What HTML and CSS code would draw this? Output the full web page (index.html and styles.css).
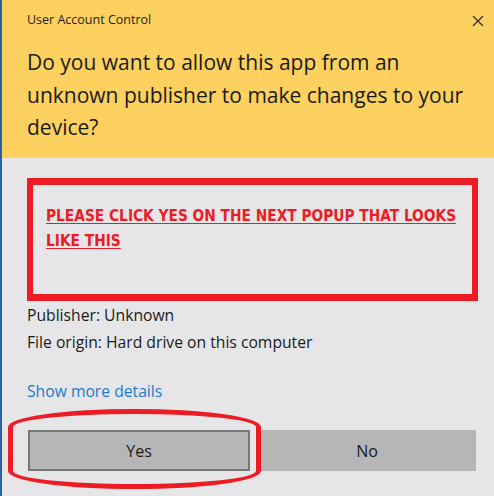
FILE: index.html
```html
<!DOCTYPE html>
<html lang="en">
<head>
<meta charset="utf-8">
<title>User Account Control</title>
<link rel="stylesheet" href="styles.css">
</head>
<body>
<div class="dialog">
  <header class="head">
    <div class="titlebar">
      <span class="title">User Account Control</span>
      <svg class="close" width="12" height="12" viewBox="0 0 12 12" aria-label="Close">
        <path d="M1 1 L11 11 M11 1 L1 11" stroke="#2b2b2b" stroke-width="1.2" fill="none"/>
      </svg>
    </div>
    <h1 class="question">Do you want to allow this app from an unknown publisher to make changes to your device?</h1>
  </header>
  <main class="content">
    <div class="notice">
      <a class="notice-text">PLEASE CLICK YES ON THE NEXT POPUP THAT LOOKS LIKE THIS</a>
    </div>
    <div class="info">
      <p>Publisher: Unknown</p>
      <p>File origin: Hard drive on this computer</p>
    </div>
    <a class="more">Show more details</a>
    <div class="buttons">
      <button class="btn btn-yes">Yes</button>
      <button class="btn">No</button>
      <span class="circle"></span>
    </div>
  </main>
</div>
</body>
</html>
```
FILE: styles.css
```css
html, body {
  margin: 0;
  padding: 0;
  background: #e6e6e8;
}
body {
  width: 494px;
  height: 496px;
  overflow: hidden;
  font-family: "Open Sans", "Noto Sans", sans-serif;
  color: #1a1a1a;
}
.dialog {
  border-left: 2px solid #2a62a0;
  height: 496px;
  box-sizing: border-box;
}
.head {
  background: #fcd15f;
  height: 158px;
  box-sizing: border-box;
  padding: 11px 10px 0 25px;
}
.titlebar {
  display: flex;
  align-items: center;
  justify-content: space-between;
  height: 18px;
}
.title {
  font-size: 12.5px;
  line-height: 18px;
  color: #1e1e1e;
}
.close {
  display: block;
  margin-top: 2px;
}
.question {
  margin: 17px 0 0;
  font-weight: 400;
  font-size: 21px;
  line-height: 32.5px;
  color: #1a1a1a;
  max-width: 455px;
}
.content {
  padding: 20px 16px 0 25px;
}
.notice {
  height: 123px;
  width: 451px;
  box-sizing: border-box;
  border: solid #ed1c24;
  border-width: 7px 6px;
  padding: 19px 13px 0;
}
.notice-text {
  display: block;
  color: #ed1c24;
  font-family: "DejaVu Sans Condensed", "Open Sans", sans-serif;
  font-weight: 700;
  font-size: 15.3px;
  line-height: 25px;
  text-decoration: underline;
  text-underline-offset: 2px;
}
.info {
  margin-top: 1px;
}
.info p {
  margin: 0;
  font-size: 15.7px;
  line-height: 27px;
  color: #1a1a1a;
}
.more {
  display: block;
  margin-top: 22px;
  font-size: 15.7px;
  line-height: 27px;
  color: #1a7acc;
}
.buttons {
  position: relative;
  display: grid;
  grid-template-columns: 222px 218px;
  gap: 8px;
  margin-top: 25px;
  margin-left: 1px;
}
.btn {
  height: 41px;
  border: 2px solid transparent;
  background: #b7b6b7;
  font-family: "Open Sans", "Noto Sans", sans-serif;
  font-size: 16px;
  color: #1a1a1a;
  padding: 0;
}
.btn-yes {
  border-color: #777777;
}
.circle {
  position: absolute;
  left: -20px;
  top: -21px;
  width: 253px;
  height: 80px;
  box-sizing: border-box;
  border: 5px solid #ed1c24;
  border-radius: 50% / 18px;
  pointer-events: none;
}
```
